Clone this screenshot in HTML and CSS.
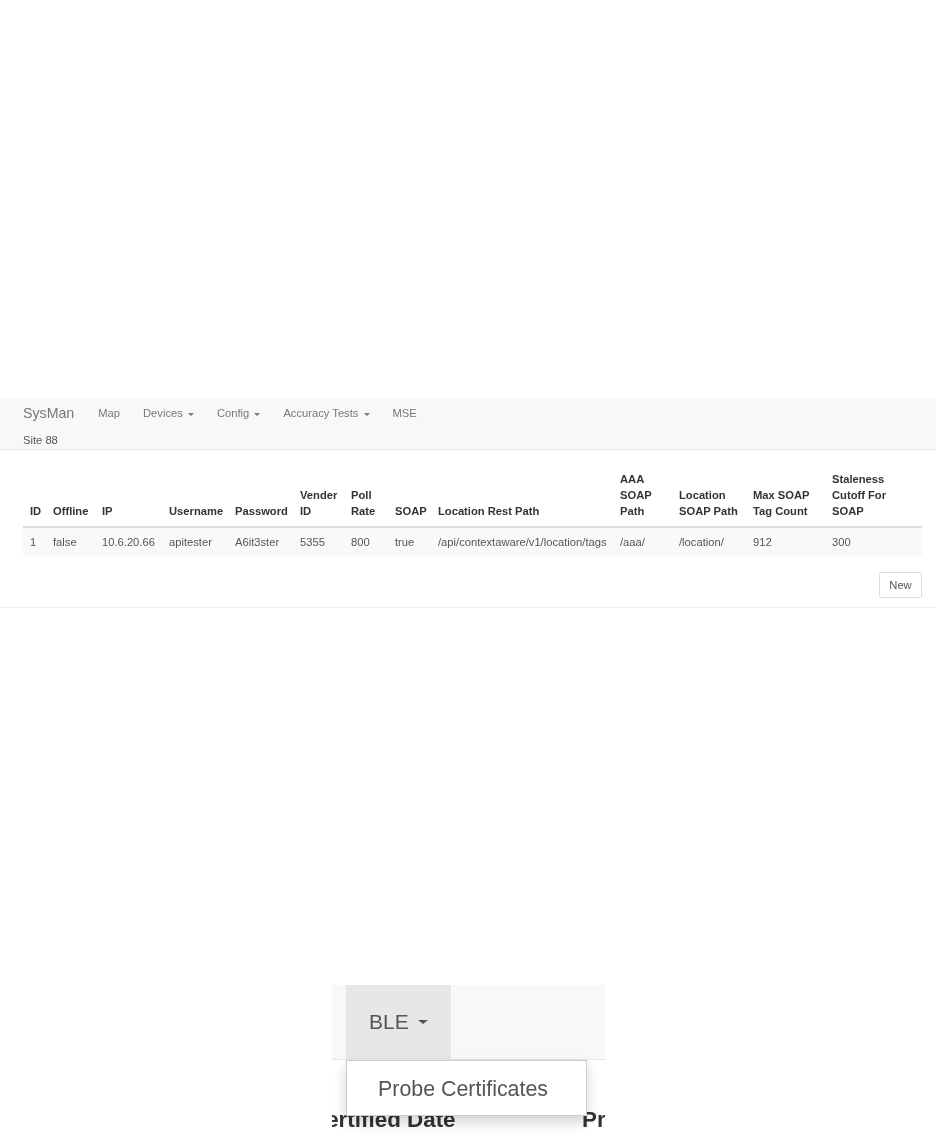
FILE: index.html
```html
<!DOCTYPE html>
<html lang="en">
<head>
  <meta charset="UTF-8" />
  <title>SysMan</title>
  <link rel="stylesheet" href="styles.css">
</head>
<body>
  <div class="shot shot-main">
    <nav class="navbar">
      <div class="nav-row">
        <span class="brand">SysMan</span>
        <a class="nav-link">Map</a>
        <a class="nav-link">Devices <span class="caret"></span></a>
        <a class="nav-link">Config <span class="caret"></span></a>
        <a class="nav-link">Accuracy Tests <span class="caret"></span></a>
        <a class="nav-link">MSE</a>
      </div>
      <div class="site">Site 88</div>
    </nav>

    <div class="content">
      <table class="table">
        <colgroup>
          <col class="c-id"><col class="c-offline"><col class="c-ip"><col class="c-user"><col class="c-pass">
          <col class="c-vender"><col class="c-poll"><col class="c-soap"><col class="c-rest"><col class="c-aaa">
          <col class="c-loc"><col class="c-max"><col class="c-stale">
        </colgroup>
        <thead>
          <tr>
            <th>ID</th>
            <th>Offline</th>
            <th>IP</th>
            <th>Username</th>
            <th>Password</th>
            <th>Vender ID</th>
            <th>Poll Rate</th>
            <th>SOAP</th>
            <th>Location Rest Path</th>
            <th>AAA SOAP Path</th>
            <th>Location SOAP Path</th>
            <th>Max SOAP Tag Count</th>
            <th>Staleness Cutoff For SOAP</th>
          </tr>
        </thead>
        <tbody>
          <tr>
            <td>1</td>
            <td>false</td>
            <td>10.6.20.66</td>
            <td>apitester</td>
            <td>A6it3ster</td>
            <td>5355</td>
            <td>800</td>
            <td>true</td>
            <td>/api/contextaware/v1/location/tags</td>
            <td>/aaa/</td>
            <td>/location/</td>
            <td>912</td>
            <td>300</td>
          </tr>
        </tbody>
      </table>
      <div class="actions">
        <button class="btn">New</button>
      </div>
    </div>
  </div>

  <div class="shot shot-menu">
    <div class="menu-bar">
      <a class="menu-toggle">BLE <span class="caret caret-big"></span></a>
    </div>
    <div class="menu-head">
      <span class="head-date">Certified Date</span>
      <span>Probe</span>
    </div>
    <div class="dropdown">Probe Certificates</div>
  </div>
</body>
</html>
```

FILE: styles.css
```css
* {
  box-sizing: border-box;
}
body {
  margin: 0;
  background: #fff;
  color: #333;
  font-family: "Liberation Sans", Arial, sans-serif;
  height: 1136px;
  overflow: hidden;
}
.shot {
  filter: blur(0.6px);
}
.shot-main {
  width: 936px;
  margin-top: 398px;
  border-bottom: 1px solid #eee;
  height: 210px;
}
.navbar {
  height: 52px;
  background: #f8f8f8;
  border-bottom: 1px solid #e7e7e7;
  padding: 0 23px;
}
.nav-row {
  display: flex;
  align-items: center;
  height: 30px;
  color: #777;
  font-size: 11.2px;
}
.brand {
  font-size: 14.2px;
  margin-right: 24px;
}
.nav-link {
  margin-right: 23px;
}
.caret {
  display: inline-block;
  width: 0;
  height: 0;
  margin-left: 2px;
  vertical-align: middle;
  border-top: 3px solid #777;
  border-left: 3px solid transparent;
  border-right: 3px solid transparent;
}
.site {
  font-size: 11.2px;
  color: #555;
  line-height: 25px;
}
.content {
  padding: 21px 14px 0 23px;
}
.table {
  width: 899px;
  border-collapse: collapse;
  table-layout: fixed;
  font-size: 11.2px;
}
.c-id { width: 23px; }
.c-offline { width: 49px; }
.c-ip { width: 67px; }
.c-user { width: 66px; }
.c-pass { width: 65px; }
.c-vender { width: 51px; }
.c-poll { width: 44px; }
.c-soap { width: 43px; }
.c-rest { width: 182px; }
.c-aaa { width: 59px; }
.c-loc { width: 74px; }
.c-max { width: 79px; }
.c-stale { width: 97px; }
.table th {
  text-align: left;
  vertical-align: bottom;
  padding: 0 7px 7px;
  line-height: 16px;
  border-bottom: 2px solid #ddd;
}
.table td {
  padding: 7px;
  line-height: 14px;
  background: #f9f9f9;
  color: #555;
  white-space: nowrap;
}
.actions {
  display: flex;
  justify-content: flex-end;
  margin-top: 16px;
}
.btn {
  width: 43px;
  height: 26px;
  padding: 0;
  background: #fff;
  border: 1px solid #ddd;
  border-radius: 2px;
  color: #555;
  font: 11.2px "Liberation Sans", Arial, sans-serif;
}
.shot-menu {
  position: relative;
  width: 273px;
  height: 151px;
  margin: 377px 0 0 332px;
  overflow: hidden;
  background: #fff;
  filter: blur(0.4px);
}
.menu-bar {
  height: 75px;
  padding-left: 14px;
  background: #f8f8f8;
  border-bottom: 1px solid #e7e7e7;
}
.menu-toggle {
  display: flex;
  align-items: center;
  gap: 9px;
  width: 105px;
  height: 74px;
  padding-left: 23px;
  background: #e7e7e7;
  color: #555;
  font-size: 21px;
}
.caret-big {
  margin-left: 0;
  border-top: 4px solid #555;
  border-left: 5px solid transparent;
  border-right: 5px solid transparent;
}
.menu-head {
  display: flex;
  padding-top: 50px;
  font-size: 22.4px;
  font-weight: bold;
  color: #333;
  line-height: 20px;
  white-space: nowrap;
}
.head-date {
  flex: none;
  width: 272px;
  margin-left: -22px;
}
.dropdown {
  position: absolute;
  left: 14px;
  top: 75px;
  width: 241px;
  height: 56px;
  padding-left: 31px;
  line-height: 56px;
  background: #fff;
  border: 1px solid #ccc;
  box-shadow: 0 6px 12px rgba(0, 0, 0, 0.18);
  color: #555;
  font-size: 21.4px;
}
```
